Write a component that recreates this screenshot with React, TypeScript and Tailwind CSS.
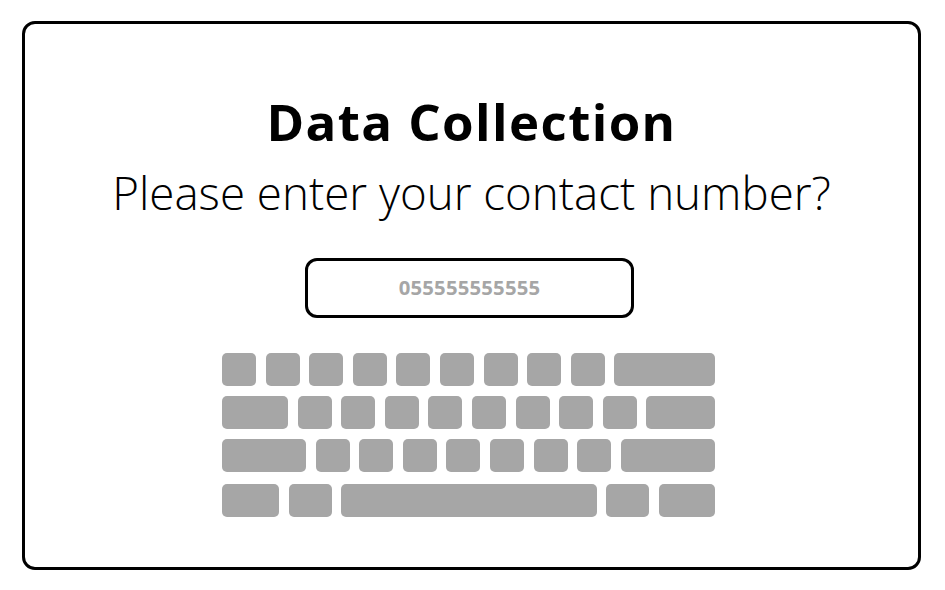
const Key = ({ w }: { w: string }) => (
  <div className={`h-[33px] rounded-[5px] bg-[#a6a6a6] ${w}`} />
);

export default function App() {
  const rows = [
    ["w-[34px]", "w-[34px]", "w-[34px]", "w-[34px]", "w-[34px]", "w-[34px]", "w-[34px]", "w-[34px]", "w-[34px]", "flex-1"],
    ["w-[66px]", "w-[34px]", "w-[34px]", "w-[34px]", "w-[34px]", "w-[34px]", "w-[34px]", "w-[34px]", "w-[34px]", "flex-1"],
    ["w-[84px]", "w-[34px]", "w-[34px]", "w-[34px]", "w-[34px]", "w-[34px]", "w-[34px]", "w-[34px]", "flex-1"],
    ["w-[57px]", "w-[43px]", "flex-1", "w-[43px]", "w-[56px]"],
  ];

  return (
    <div className="w-[945px] h-[590px] bg-white pl-[22px] pt-[21px] font-['Open_Sans',sans-serif]">
      <div className="w-[899px] h-[549px] border-[3px] border-black rounded-[13px] flex flex-col items-center pt-[72px]">
        <h1 className="text-[51px] leading-none font-bold tracking-[1.4px] text-black">Data Collection</h1>
        <p className="mt-[23px] text-[45.7px] leading-none font-light text-black">
          Please enter your contact number?
        </p>
        <div className="mt-[42px] w-[329px] h-[60px] border-[3px] border-black rounded-[12px] flex items-center justify-center -translate-x-[2px]">
          <span className="text-[20.3px] font-bold tracking-[0.2px] text-[#a6a6a6]">055555555555</span>
        </div>
        <div className="mt-[35px] w-[493px] flex flex-col gap-[10px] -translate-x-[3px]">
          {rows.map((row, i) => (
            <div key={i} className={`flex gap-[9.6px] ${i === 3 ? "mt-[2px]" : ""}`}>
              {row.map((w, j) => (
                <Key key={j} w={w} />
              ))}
            </div>
          ))}
        </div>
      </div>
    </div>
  );
}
